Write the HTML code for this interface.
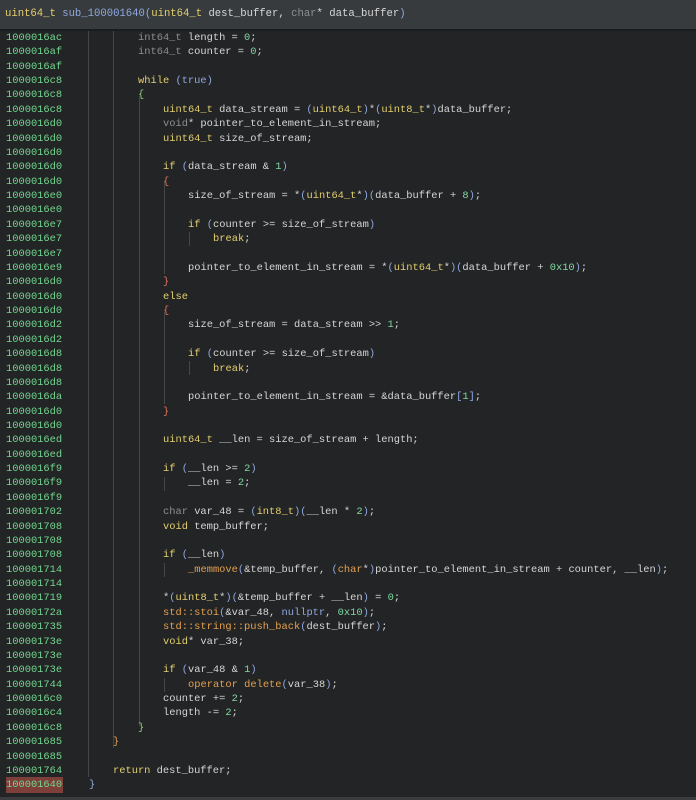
<!DOCTYPE html>
<html><head><meta charset="utf-8"><style>
html,body{margin:0;padding:0;width:696px;height:800px;overflow:hidden;background:#232426;}
body{font-family:"Liberation Mono",monospace;font-size:10.4px;color:#d6d6d6;position:relative}
.hdr{position:absolute;left:0;top:0;width:696px;height:29px;background:#383b3d;border-bottom:2px solid #1b1c1d;}
.hdr div{position:absolute;left:5px;top:8px;font-size:10.6px;white-space:pre}
.ln{position:absolute;left:0;height:14.37px;line-height:14.37px;white-space:pre;width:696px}
.a{position:absolute;left:6px;color:#72d88e}
.c{position:absolute}
.y{color:#e3cf6e}.g{color:#8e8e8e}.p{color:#8fa8e0}.n{color:#7fd8a0}.o{color:#e3a04e}.b{color:#8fa8e0}.r{color:#e0705c}.gr{color:#8fcf7a}
.v{position:absolute;width:1px;background:#444648}
.foot{position:absolute;left:0;top:797px;width:696px;height:3px;background:#3a3c3e}
.hl{position:absolute;left:6px;top:777px;width:57px;height:16px;background:#7c3f3a}
</style></head><body>
<div class="hdr"><div><span class="y">uint64_t</span> <span class="p">sub_100001640(</span><span class="y">uint64_t</span> dest_buffer, <span class="g">char</span>* data_buffer<span class="p">)</span></div></div>
<div class="v" style="left:88px;top:31px;height:746px"></div>
<div class="v" style="left:113px;top:31px;height:717px"></div>
<div class="v" style="left:139px;top:96px;height:630px"></div>
<div class="v" style="left:164px;top:182px;height:92px"></div>
<div class="v" style="left:189px;top:232px;height:14px"></div>
<div class="v" style="left:164px;top:312px;height:92px"></div>
<div class="v" style="left:189px;top:361px;height:14px"></div>
<div class="v" style="left:164px;top:477px;height:14px"></div>
<div class="v" style="left:164px;top:563px;height:14px"></div>
<div class="v" style="left:164px;top:678px;height:14px"></div>
<div class="hl"></div>
<div id="code"></div>
<div class="foot"></div>
<script>
var L=[
["1000016ac",2,'<span class="g">int64_t</span> length = <span class="n">0</span>;'],
["1000016af",2,'<span class="g">int64_t</span> counter = <span class="n">0</span>;'],
["1000016af",2,''],
["1000016c8",2,'<span class="y">while</span> <span class="p">(</span><span class="p">true</span><span class="p">)</span>'],
["1000016c8",2,'<span class="gr">{</span>'],
["1000016c8",3,'<span class="y">uint64_t</span> data_stream = <span class="p">(</span><span class="y">uint64_t</span><span class="p">)</span>*<span class="p">(</span><span class="y">uint8_t</span>*<span class="p">)</span>data_buffer;'],
["1000016d0",3,'<span class="g">void</span>* pointer_to_element_in_stream;'],
["1000016d0",3,'<span class="y">uint64_t</span> size_of_stream;'],
["1000016d0",3,''],
["1000016d0",3,'<span class="y">if</span> <span class="p">(</span>data_stream &amp; <span class="n">1</span><span class="p">)</span>'],
["1000016d0",3,'<span class="r">{</span>'],
["1000016e0",4,'size_of_stream = *<span class="p">(</span><span class="y">uint64_t</span>*<span class="p">)(</span>data_buffer + <span class="n">8</span><span class="p">)</span>;'],
["1000016e0",4,''],
["1000016e7",4,'<span class="y">if</span> <span class="p">(</span>counter &gt;= size_of_stream<span class="p">)</span>'],
["1000016e7",5,'<span class="y">break</span>;'],
["1000016e7",4,''],
["1000016e9",4,'pointer_to_element_in_stream = *<span class="p">(</span><span class="y">uint64_t</span>*<span class="p">)(</span>data_buffer + <span class="n">0x10</span><span class="p">)</span>;'],
["1000016d0",3,'<span class="r">}</span>'],
["1000016d0",3,'<span class="y">else</span>'],
["1000016d0",3,'<span class="r">{</span>'],
["1000016d2",4,'size_of_stream = data_stream &gt;&gt; <span class="n">1</span>;'],
["1000016d2",4,''],
["1000016d8",4,'<span class="y">if</span> <span class="p">(</span>counter &gt;= size_of_stream<span class="p">)</span>'],
["1000016d8",5,'<span class="y">break</span>;'],
["1000016d8",4,''],
["1000016da",4,'pointer_to_element_in_stream = &amp;data_buffer<span class="p">[</span><span class="n">1</span><span class="p">]</span>;'],
["1000016d0",3,'<span class="r">}</span>'],
["1000016d0",3,''],
["1000016ed",3,'<span class="y">uint64_t</span> __len = size_of_stream + length;'],
["1000016ed",3,''],
["1000016f9",3,'<span class="y">if</span> <span class="p">(</span>__len &gt;= <span class="n">2</span><span class="p">)</span>'],
["1000016f9",4,'__len = <span class="n">2</span>;'],
["1000016f9",3,''],
["100001702",3,'<span class="g">char</span> var_48 = <span class="p">(</span><span class="y">int8_t</span><span class="p">)(</span>__len * <span class="n">2</span><span class="p">)</span>;'],
["100001708",3,'<span class="y">void</span> temp_buffer;'],
["100001708",3,''],
["100001708",3,'<span class="y">if</span> <span class="p">(</span>__len<span class="p">)</span>'],
["100001714",4,'<span class="o">_memmove</span><span class="p">(</span>&amp;temp_buffer, <span class="p">(</span><span class="o">char</span>*<span class="p">)</span>pointer_to_element_in_stream + counter, __len<span class="p">)</span>;'],
["100001714",3,''],
["100001719",3,'*<span class="p">(</span><span class="y">uint8_t</span>*<span class="p">)(</span>&amp;temp_buffer + __len<span class="p">)</span> = <span class="n">0</span>;'],
["10000172a",3,'<span class="o">std::stoi</span><span class="p">(</span>&amp;var_48, <span class="p">nullptr</span>, <span class="n">0x10</span><span class="p">)</span>;'],
["100001735",3,'<span class="o">std::string::push_back</span><span class="p">(</span>dest_buffer<span class="p">)</span>;'],
["10000173e",3,'<span class="y">void</span>* var_38;'],
["10000173e",3,''],
["10000173e",3,'<span class="y">if</span> <span class="p">(</span>var_48 &amp; <span class="n">1</span><span class="p">)</span>'],
["100001744",4,'<span class="o">operator delete</span><span class="p">(</span>var_38<span class="p">)</span>;'],
["1000016c0",3,'counter += <span class="n">2</span>;'],
["1000016c4",3,'length -= <span class="n">2</span>;'],
["1000016c8",2,'<span class="gr">}</span>'],
["100001685",1,'<span class="o">}</span>'],
["100001685",1,''],
["100001764",1,'<span class="y">return</span> dest_buffer;'],
["100001640",0,'<span class="b">}</span>']
];
var X=[89,113,138,163,188,213],h='';
for(var i=0;i<L.length;i++){h+='<div class="ln" style="top:'+(31+i*14.37).toFixed(2)+'px"><span class="a">'+L[i][0]+'</span><span class="c" style="left:'+X[L[i][1]]+'px">'+L[i][2]+'</span></div>';}
document.getElementById('code').innerHTML=h;
</script>
</body></html>
